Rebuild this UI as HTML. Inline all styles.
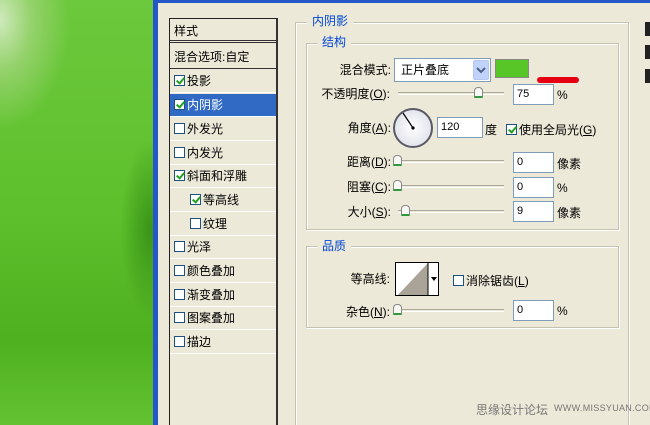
<!DOCTYPE html>
<html><head><meta charset="utf-8"><style>
*{margin:0;padding:0;box-sizing:border-box}
html,body{width:650px;height:425px;overflow:hidden}
body{position:relative;background:#ece9d8;font-family:"Liberation Sans","Noto Sans CJK SC","WenQuanYi Zen Hei",sans-serif;font-size:12px;color:#000}
.a{position:absolute;white-space:nowrap}
#green{left:0;top:0;width:153px;height:425px;background:radial-gradient(ellipse 70px 110px at 0 20px,#cfeabc 0%,#95d26c 45%,transparent 100%),radial-gradient(ellipse 30px 90px at 150px 230px,#3a9418 0%,transparent 100%),linear-gradient(180deg,#6cc83c 0%,#5ec02c 50%,#4fb020 80%,#62c232 100%)}
#bord{left:153px;top:0;width:5px;height:425px;background:#2457c8}
#topb{left:153px;top:0;width:497px;height:3px;background:#2457c8}
#list{left:169px;top:18px;width:109px;height:407px;background:#ece9d8;border:1px solid #222;border-right:2px solid #333;border-bottom:none}
.row{position:absolute;left:0;width:106px;height:23px;border-bottom:1px solid #fff;line-height:22px;padding-left:4px}
.cb{display:inline-block;width:11px;height:11px;border:1px solid #1c5180;background:#fff;vertical-align:-1px;margin-right:2px;position:relative}
.cb.c::after{content:"";position:absolute;left:3px;top:0px;width:3px;height:6px;border:solid #21a121;border-width:0 2px 2px 0;transform:rotate(40deg)}
.grp{position:absolute;border:1px solid #c5c2b2;box-shadow:inset 1px 1px 0 #fff,1px 1px 0 #fff}
.leg{position:absolute;background:#ece9d8;color:#0046d5;padding:0 5px;font-size:12px;line-height:14px}
.inp{position:absolute;background:#fff;border:1px solid #7f9db9;height:21px;line-height:19px;padding-left:3px;font-size:11px}
.trk{position:absolute;height:3px;border-top:1px solid #aca899;border-bottom:1px solid #fff;background:#ece9d8}
.th{position:absolute;width:9px;height:11px;background:#f7f7f4;border:1px solid #888;border-bottom:2px solid #2e9a3c;border-radius:4px 4px 1px 1px}
.lbl{position:absolute;text-align:right;width:100px;line-height:14px}
</style></head><body>
<div class="a" id="green"></div>
<div class="a" id="bord"></div>
<div class="a" id="topb"></div>

<div class="a" id="list">
 <div class="row" style="top:0;height:24px;border-bottom:3px double #333;line-height:24px">样式</div>
 <div class="row" style="top:27px;height:23px;border-bottom:1px solid #333">混合选项:自定</div>
 <div class="row" style="top:51px"><span class="cb c"></span>投影</div>
 <div class="row" style="top:75px;background:#316ac5;color:#fff"><span class="cb c"></span>内阴影</div>
 <div class="row" style="top:99px"><span class="cb"></span>外发光</div>
 <div class="row" style="top:123px"><span class="cb"></span>内发光</div>
 <div class="row" style="top:146px"><span class="cb c"></span>斜面和浮雕</div>
 <div class="row" style="top:170px;padding-left:20px"><span class="cb c"></span>等高线</div>
 <div class="row" style="top:194px;padding-left:20px"><span class="cb"></span>纹理</div>
 <div class="row" style="top:217px"><span class="cb"></span>光泽</div>
 <div class="row" style="top:241px"><span class="cb"></span>颜色叠加</div>
 <div class="row" style="top:265px"><span class="cb"></span>渐变叠加</div>
 <div class="row" style="top:288px"><span class="cb"></span>图案叠加</div>
 <div class="row" style="top:312px"><span class="cb"></span>描边</div>
</div>

<div class="grp" style="left:295px;top:22px;width:334px;height:410px"></div>
<div class="leg" style="left:307px;top:14px">内阴影</div>
<div class="grp" style="left:306px;top:43px;width:313px;height:187px"></div>
<div class="leg" style="left:317px;top:35px">结构</div>
<div class="grp" style="left:306px;top:246px;width:313px;height:82px"></div>
<div class="leg" style="left:317px;top:239px">品质</div>

<div class="a" style="left:645px;top:22px;width:5px;height:14px;background:#222"></div>
<div class="a" style="left:645px;top:45px;width:5px;height:14px;background:#222"></div>
<div class="a" style="left:645px;top:69px;width:5px;height:14px;background:#222"></div>

<div class="lbl" style="left:291px;top:63px">混合模式:</div>
<div class="inp" style="left:394px;top:58px;width:97px;height:24px;line-height:22px;padding-left:6px;font-size:12px">正片叠底</div>
<div class="a" style="left:473px;top:60px;width:16px;height:20px;background:#c1d3fb;border:1px solid #b6c8f0;border-radius:2px"><svg width="14" height="18"><polyline points="3,7 7,11 11,7" fill="none" stroke="#4d6185" stroke-width="2"/></svg></div>
<div class="a" style="left:495px;top:59px;width:34px;height:19px;background:#58c626;border:1px solid #888"></div>
<div class="a" style="left:537px;top:77px;width:42px;height:6px;background:#e60012;border-radius:3px"></div>

<div class="lbl" style="left:290px;top:87px">不透明度(<u>O</u>):</div>
<div class="trk" style="left:398px;top:92px;width:106px"></div>
<div class="th" style="left:474px;top:87px"></div>
<div class="inp" style="left:513px;top:84px;width:41px">75</div>
<div class="a" style="left:557px;top:88px">%</div>

<div class="lbl" style="left:291px;top:121px">角度(<u>A</u>):</div>
<svg class="a" style="left:392px;top:107px" width="42" height="42"><defs><radialGradient id="g"><stop offset="0" stop-color="#fff"/><stop offset="1" stop-color="#e2e4ec"/></radialGradient></defs><circle cx="21" cy="21" r="19" fill="url(#g)" stroke="#5a5a66" stroke-width="2"/><line x1="21" y1="21" x2="11" y2="6" stroke="#000" stroke-width="1.2"/><circle cx="21" cy="21" r="1.6" fill="#000"/></svg>
<div class="inp" style="left:437px;top:117px;width:46px">120</div>
<div class="a" style="left:485px;top:121px">度</div>
<div class="a" style="left:506px;top:121px"><span class="cb c"></span>使用全局光(<u>G</u>)</div>

<div class="lbl" style="left:291px;top:155px">距离(<u>D</u>):</div>
<div class="trk" style="left:398px;top:160px;width:106px"></div>
<div class="th" style="left:393px;top:155px"></div>
<div class="inp" style="left:513px;top:152px;width:41px">0</div>
<div class="a" style="left:557px;top:155px">像素</div>

<div class="lbl" style="left:291px;top:180px">阻塞(<u>C</u>):</div>
<div class="trk" style="left:398px;top:185px;width:106px"></div>
<div class="th" style="left:393px;top:180px"></div>
<div class="inp" style="left:513px;top:177px;width:41px">0</div>
<div class="a" style="left:557px;top:181px">%</div>

<div class="lbl" style="left:291px;top:205px">大小(<u>S</u>):</div>
<div class="trk" style="left:398px;top:210px;width:106px"></div>
<div class="th" style="left:401px;top:205px"></div>
<div class="inp" style="left:513px;top:201px;width:41px">9</div>
<div class="a" style="left:557px;top:204px">像素</div>

<div class="lbl" style="left:290px;top:272px">等高线:</div>
<div class="a" style="left:395px;top:262px;width:44px;height:34px;border:1px solid #000;background:#fff;overflow:hidden">
<svg width="44" height="34"><polygon points="0,34 32,0 32,34" fill="#aaa498"/><line x1="32" y1="0" x2="32" y2="34" stroke="#000"/><polygon points="35,14 41,14 38,18" fill="#000"/></svg></div>
<div class="a" style="left:453px;top:272px"><span class="cb" style="border-color:#1c5180"></span>消除锯齿(<u>L</u>)</div>

<div class="lbl" style="left:290px;top:305px">杂色(<u>N</u>):</div>
<div class="trk" style="left:398px;top:309px;width:106px"></div>
<div class="th" style="left:393px;top:304px"></div>
<div class="inp" style="left:513px;top:300px;width:41px">0</div>
<div class="a" style="left:557px;top:304px">%</div>

<div class="a" style="left:476px;top:401px;color:#777;font-size:12px">思缘设计论坛</div>
<div class="a" style="left:554px;top:403px;color:#777;font-size:9px;letter-spacing:0.3px">WWW.MISSYUAN.COM</div>
</body></html>
